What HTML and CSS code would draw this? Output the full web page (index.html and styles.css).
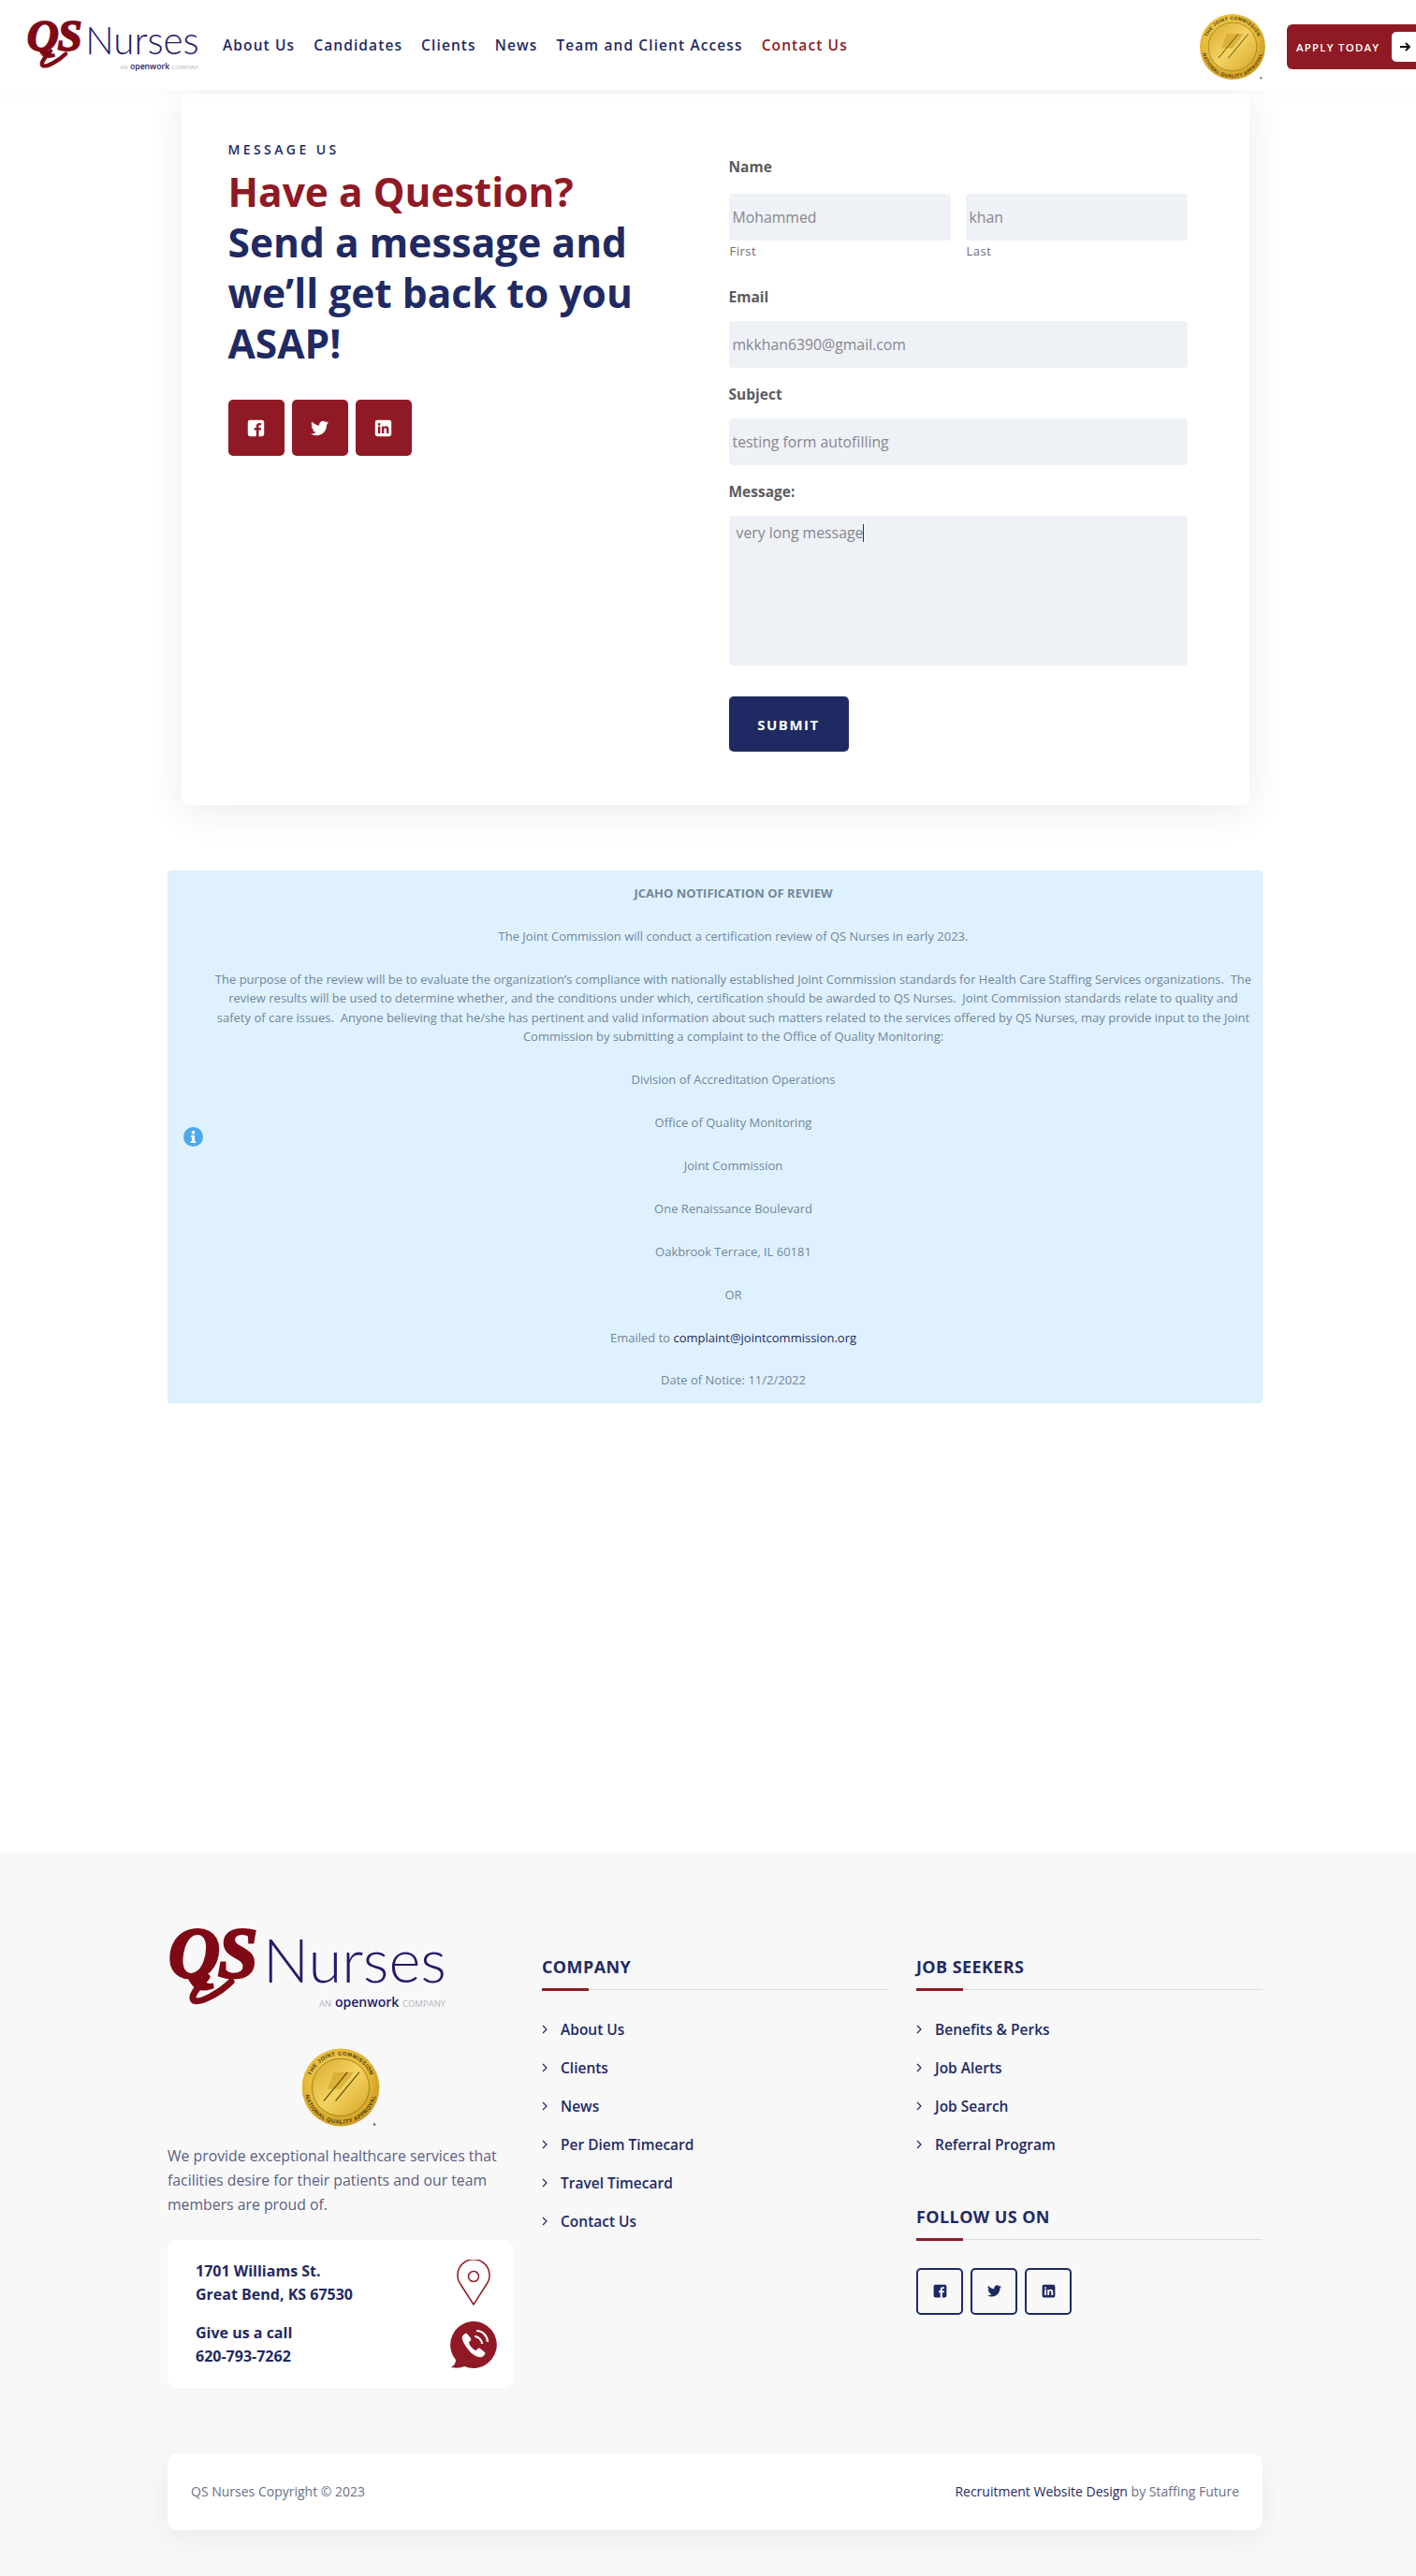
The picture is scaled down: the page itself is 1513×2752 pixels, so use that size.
FILE: index.html
```html
<!DOCTYPE html>
<html lang="en">
<head>
    <meta charset="utf-8" />
    <meta name="viewport" content="width=device-width, initial-scale=1.0">
    <title>Contact Us - QS Nurses</title>
    <link rel="stylesheet" href="styles.css">
</head>
<body>
    <svg class="icon-defs" width="0" height="0" aria-hidden="true">
        <defs>
            <radialGradient id="gold" cx="45%" cy="40%" r="65%">
                <stop offset="0%" stop-color="#f6d766" />
                <stop offset="60%" stop-color="#e6bb3a" />
                <stop offset="100%" stop-color="#c8941c" />
            </radialGradient>
            <linearGradient id="goldInner" x1="0" y1="0" x2="1" y2="1">
                <stop offset="0%" stop-color="#d9a92a" />
                <stop offset="50%" stop-color="#f3d462" />
                <stop offset="100%" stop-color="#d6a326" />
            </linearGradient>
            <path id="sealTop" d="M12 50a38 38 0 0 1 76 0" />
            <path id="sealBottom" d="M7 50a43 43 0 0 0 86 0" />
        </defs>
        <symbol id="seal" viewBox="0 0 100 100">
            <circle cx="50" cy="50" r="46" fill="url(#gold)" />
            <circle cx="50" cy="50" r="34" fill="url(#goldInner)" stroke="#8a6a14" stroke-width=".8" />
            <path d="M42 32h24L50 52H34z" fill="#d6a52c" opacity=".7" />
            <path d="M30 66l28-34M44 66l28-34" stroke="#5e4a10" stroke-width="1.300" fill="none" />
            <text class="seal-text"><textPath href="#sealTop" startOffset="50%" text-anchor="middle">THE JOINT COMMISSION</textPath></text>
            <text class="seal-text"><textPath href="#sealBottom" startOffset="50%" text-anchor="middle">NATIONAL QUALITY APPROVAL</textPath></text>
            <circle cx="90" cy="94" r="1.500" fill="#666" />
        </symbol>
        <symbol id="logo" viewBox="0 0 300 92">
            <path d="M42 54C32 66 24 74 28 79c6 4 28-8 40-20" fill="none" stroke="#7f0a16" stroke-width="7" stroke-linecap="round" />
            <text class="logo-qs" x="1" y="54">QS</text>
            <text class="logo-name" x="102" y="60" textLength="196" lengthAdjust="spacingAndGlyphs">Nurses</text>
            <text class="logo-sub" x="162" y="86">AN</text>
            <text class="logo-open" x="179" y="86">openwork</text>
            <text class="logo-sub" x="251" y="86">COMPANY</text>
        </symbol>
        <symbol id="fb" viewBox="0 0 24 24">
            <path d="M4 1h16a3 3 0 0 1 3 3v16a3 3 0 0 1-3 3h-4.200v-8.400h2.800l.4-3.200h-3.200V9.500c0-.9.3-1.500 1.600-1.500H19V5.100c-.3 0-1.300-.1-2.500-.1-2.500 0-4.100 1.500-4.100 4.200v2.200H9.600v3.200h2.800V23H4a3 3 0 0 1-3-3V4a3 3 0 0 1 3-3z" />
        </symbol>
        <symbol id="tw" viewBox="0 0 24 24">
            <path d="M23.953 4.570a10 10 0 0 1-2.825.775 4.958 4.958 0 0 0 2.163-2.723c-.951.555-2.005.959-3.127 1.184a4.920 4.920 0 0 0-8.384 4.482C7.690 8.095 4.067 6.130 1.640 3.162a4.822 4.822 0 0 0-.666 2.475c0 1.710.87 3.213 2.188 4.096a4.904 4.904 0 0 1-2.228-.616v.06a4.923 4.923 0 0 0 3.946 4.827 4.996 4.996 0 0 1-2.212.085 4.936 4.936 0 0 0 4.604 3.417 9.867 9.867 0 0 1-6.102 2.105c-.39 0-.779-.023-1.170-.067a13.995 13.995 0 0 0 7.557 2.209c9.053 0 13.998-7.496 13.998-13.985 0-.21 0-.42-.015-.63A9.935 9.935 0 0 0 24 4.590z" />
        </symbol>
        <symbol id="in" viewBox="0 0 24 24">
            <path fill-rule="evenodd" d="M4 1h16a3 3 0 0 1 3 3v16a3 3 0 0 1-3 3H4a3 3 0 0 1-3-3V4a3 3 0 0 1 3-3zM5 9.500V19h3V9.500zM6.500 5a1.700 1.700 0 1 0 0 3.400 1.700 1.700 0 0 0 0-3.400zM10 9.500V19h3v-5c0-1.300.6-2.200 1.800-2.200s1.700.9 1.700 2.200v5h3v-5.600c0-2.800-1.500-4.100-3.600-4.100-1.400 0-2.400.7-2.900 1.500V9.500z" />
        </symbol>
        <symbol id="chev" viewBox="0 0 6 10">
            <path d="M1 1l4 4-4 4" fill="none" stroke="currentColor" stroke-width="1.200" />
        </symbol>
    </svg>

    <div class="page">
        <header class="site-header">
            <a class="header-logo" href="#"><svg width="186" height="57"><use href="#logo" /></svg></a>
            <nav class="main-nav">
                <a href="#">About Us</a>
                <a href="#">Candidates</a>
                <a href="#">Clients</a>
                <a href="#">News</a>
                <a href="#">Team and Client Access</a>
                <a class="active" href="#">Contact Us</a>
            </nav>
            <svg class="header-seal" width="76" height="76"><use href="#seal" /></svg>
            <a class="apply-btn" href="#">
                <span>APPLY TODAY</span>
                <span class="apply-arrow">
                    <svg width="12" height="10" viewBox="0 0 12 10"><path d="M0 5h9M6 1l4 4-4 4" fill="none" stroke="#111" stroke-width="2" /></svg>
                </span>
            </a>
        </header>

        <section class="contact-card">
            <div class="contact-intro">
                <p class="eyebrow">MESSAGE US</p>
                <h1><span class="red">Have a Question?</span><br>Send a message and<br>we’ll get back to you<br>ASAP!</h1>
                <div class="social-red">
                    <a href="#"><svg width="19" height="19"><use href="#fb" /></svg></a>
                    <a href="#"><svg width="19" height="19"><use href="#tw" /></svg></a>
                    <a href="#"><svg width="19" height="19"><use href="#in" /></svg></a>
                </div>
            </div>
            <form class="contact-form" onsubmit="return false;">
                <label class="label-name">Name</label>
                <div class="name-row">
                    <div>
                        <input type="text" value="Mohammed" />
                        <small>First</small>
                    </div>
                    <div>
                        <input type="text" value="khan" />
                        <small>Last</small>
                    </div>
                </div>
                <label>Email</label>
                <input type="email" value="mkkhan6390@gmail.com" />
                <label>Subject</label>
                <input type="text" value="testing form autofilling" />
                <label>Message:</label>
                <div class="message-box">very long message<span class="caret"></span></div>
                <button type="submit">SUBMIT</button>
            </form>
        </section>

        <section class="notice">
            <svg class="notice-icon" width="21" height="21" viewBox="0 0 21 21">
                <circle cx="10.500" cy="10.500" r="10.500" fill="#4ea9ea" />
                <circle cx="10.500" cy="5.800" r="1.900" fill="#fff" />
                <path d="M8 9h4v6h1.300v2H7.700v-2H9v-4H8z" fill="#fff" />
            </svg>
            <div class="notice-body">
                <p><strong>JCAHO NOTIFICATION OF REVIEW</strong></p>
                <p>The Joint Commission will conduct a certification review of QS Nurses in early 2023.</p>
                <p>The purpose of the review will be to evaluate the organization’s compliance with nationally established Joint Commission standards for Health Care Staffing Services organizations.&nbsp; The<br>review results will be used to determine whether, and the conditions under which, certification should be awarded to QS Nurses.&nbsp; Joint Commission standards relate to quality and<br>safety of care issues.&nbsp; Anyone believing that he/she has pertinent and valid information about such matters related to the services offered by QS Nurses, may provide input to the Joint<br>Commission by submitting a complaint to the Office of Quality Monitoring:</p>
                <p>Division of Accreditation Operations</p>
                <p>Office of Quality Monitoring</p>
                <p>Joint Commission</p>
                <p>One Renaissance Boulevard</p>
                <p>Oakbrook Terrace, IL 60181</p>
                <p>OR</p>
                <p>Emailed to <a href="#">complaint@jointcommission.org</a></p>
                <p>Date of Notice: 11/2/2022</p>
            </div>
        </section>

        <footer class="site-footer">
            <div class="footer-grid">
                <div class="footer-about">
                    <svg class="footer-logo" width="300" height="92"><use href="#logo" /></svg>
                    <svg class="footer-seal" width="90" height="90"><use href="#seal" /></svg>
                    <p>We provide exceptional healthcare services that facilities desire for their patients and our team members are proud of.</p>
                    <div class="contact-box">
                        <div class="contact-line">
                            <span>1701 Williams St.<br>Great Bend, KS 67530</span>
                            <svg width="36" height="50" viewBox="0 0 36 50">
                                <path d="M18 48L4.500 27A17 17 0 1 1 31.500 27z" fill="none" stroke="#8f1a25" stroke-width="1.500" stroke-linejoin="round" />
                                <circle cx="18" cy="18" r="5.500" fill="none" stroke="#8f1a25" stroke-width="1.500" />
                            </svg>
                        </div>
                        <div class="contact-line">
                            <span>Give us a call<br>620-793-7262</span>
                            <svg width="50" height="50" viewBox="0 0 50 50">
                                <path d="M25 0a25 25 0 1 1-10 48c-4 2-9 2-14 1 3-2 5-4 5-8A25 25 0 0 1 25 0z" fill="#8f1a25" />
                                <path d="M13 16c2-3 4-4 5-3l4 5c1 1 0 3-2 4 0 3 5 9 8 9 1-2 3-3 4-2l5 4c1 1 0 3-3 5-3 1-9-1-14-7s-8-12-7-15z" fill="#fff" />
                                <path d="M26 16c4 0 8 4 8 8M28 10c7 0 12 6 12 12" fill="none" stroke="#fff" stroke-width="2.200" />
                            </svg>
                        </div>
                    </div>
                </div>
                <div class="footer-col">
                    <h4>COMPANY</h4>
                    <ul>
                        <li><svg width="6" height="10"><use href="#chev" /></svg><a href="#">About Us</a></li>
                        <li><svg width="6" height="10"><use href="#chev" /></svg><a href="#">Clients</a></li>
                        <li><svg width="6" height="10"><use href="#chev" /></svg><a href="#">News</a></li>
                        <li><svg width="6" height="10"><use href="#chev" /></svg><a href="#">Per Diem Timecard</a></li>
                        <li><svg width="6" height="10"><use href="#chev" /></svg><a href="#">Travel Timecard</a></li>
                        <li><svg width="6" height="10"><use href="#chev" /></svg><a href="#">Contact Us</a></li>
                    </ul>
                </div>
                <div class="footer-col">
                    <h4>JOB SEEKERS</h4>
                    <ul>
                        <li><svg width="6" height="10"><use href="#chev" /></svg><a href="#">Benefits &amp; Perks</a></li>
                        <li><svg width="6" height="10"><use href="#chev" /></svg><a href="#">Job Alerts</a></li>
                        <li><svg width="6" height="10"><use href="#chev" /></svg><a href="#">Job Search</a></li>
                        <li><svg width="6" height="10"><use href="#chev" /></svg><a href="#">Referral Program</a></li>
                    </ul>
                    <h4 class="follow-title">FOLLOW US ON</h4>
                    <div class="social-outline">
                        <a href="#"><svg width="15" height="15"><use href="#fb" /></svg></a>
                        <a href="#"><svg width="15" height="15"><use href="#tw" /></svg></a>
                        <a href="#"><svg width="15" height="15"><use href="#in" /></svg></a>
                    </div>
                </div>
            </div>
            <div class="copyright">
                <span>QS Nurses Copyright © 2023</span>
                <span><a href="#">Recruitment Website Design</a> by Staffing Future</span>
            </div>
        </footer>
    </div>
</body>
</html>
```

FILE: styles.css
```css
html {
    overflow-x: hidden;
}
body {
    margin: 0;
    font-family: "Open Sans", "Liberation Sans", sans-serif;
    color: #1f2a63;
    background: #fff;
}
a {
    color: inherit;
    text-decoration: none;
}
.icon-defs {
    position: absolute;
}
.page {
    width: 1528px;
}
.seal-text {
    font-family: "Liberation Sans", sans-serif;
    font-size: 6.500px;
    font-weight: 700;
    letter-spacing: .6px;
    fill: #4e3c0c;
}
.logo-qs {
    font-family: "Liberation Serif", serif;
    font-size: 76px;
    font-style: italic;
    font-weight: 700;
    letter-spacing: -2px;
    fill: #7f0a16;
    stroke: #7f0a16;
    stroke-width: 3px;
}
.logo-name {
    font-family: Lato, sans-serif;
    font-size: 66px;
    font-weight: 300;
    fill: #231c68;
}
.logo-sub {
    font-family: "Open Sans", sans-serif;
    font-size: 9.500px;
    fill: #b5b5b8;
}
.logo-open {
    font-family: "Open Sans", sans-serif;
    font-size: 14px;
    font-weight: 600;
    fill: #231c68;
}

/* header */
.site-header {
    position: relative;
    z-index: 2;
    display: flex;
    align-items: center;
    height: 96px;
    padding-left: 28px;
    background: #fff;
    box-shadow: 0 4px 14px rgba(0, 0, 0, .02);
}
.header-logo {
    display: flex;
    margin-top: 3px;
}
.main-nav {
    display: flex;
    gap: 20px;
    margin-left: 24px;
    font-size: 15.500px;
    font-weight: 600;
    letter-spacing: 1.100px;
}
.main-nav .active {
    color: #8f1a25;
}
.header-seal {
    margin-left: auto;
    margin-right: 20px;
    margin-top: 4px;
}
.apply-btn {
    display: flex;
    align-items: center;
    justify-content: space-between;
    width: 153px;
    height: 48px;
    box-sizing: border-box;
    margin-top: 4px;
    padding-left: 10px;
    border-radius: 6px 0 0 6px;
    background: #8f1a25;
    color: #fff;
    font-size: 11.500px;
    font-weight: 600;
    letter-spacing: 1.200px;
}
.apply-arrow {
    display: flex;
    align-items: center;
    width: 41px;
    height: 32px;
    box-sizing: border-box;
    padding-left: 9px;
    border-radius: 5px 0 0 5px;
    background: #fff;
}

/* contact card */
.contact-card {
    display: grid;
    grid-template-columns: 535px 1fr;
    width: 1141px;
    box-sizing: border-box;
    margin: 4px auto 0;
    padding: 50px 66px 57px 50px;
    border-radius: 8px;
    background: #fff;
    box-shadow: 0 6px 40px rgba(20, 30, 70, .09);
}
.eyebrow {
    margin: 0 0 8px;
    font-size: 14px;
    font-weight: 600;
    line-height: 20px;
    letter-spacing: 3.400px;
}
.contact-intro h1 {
    margin: 0 0 33px;
    font-size: 42.500px;
    font-weight: 700;
    line-height: 54px;
}
.red {
    color: #8f1a25;
}
.social-red {
    display: flex;
    gap: 8px;
}
.social-red a {
    display: flex;
    align-items: center;
    justify-content: center;
    width: 60px;
    height: 60px;
    border-radius: 5px;
    background: #8f1a25;
    fill: #fff;
}
.contact-form {
    display: flex;
    flex-direction: column;
}
.contact-form label {
    display: block;
    margin: 0 0 15px;
    color: #5c5c61;
    font-size: 15.500px;
    font-weight: 700;
    line-height: 22px;
}
.contact-form .label-name {
    margin-top: 17px;
    margin-bottom: 18px;
}
.contact-form input,
.message-box {
    width: 100%;
    box-sizing: border-box;
    border: none;
    border-radius: 4px;
    background: #eef1f6;
    color: #85878e;
    font-family: inherit;
    font-size: 15.800px;
    outline: none;
}
.contact-form input {
    display: block;
    height: 50px;
    margin-bottom: 17px;
    padding: 0 4px;
}
.name-row {
    display: grid;
    grid-template-columns: 1fr 1fr;
    gap: 16px;
    margin-bottom: 28px;
}
.name-row input {
    margin-bottom: 1px;
}
.name-row small {
    display: block;
    padding-left: 1px;
    color: #6a6a70;
    font-size: 13px;
    line-height: 20px;
    letter-spacing: .5px;
}
.message-box {
    height: 160px;
    padding: 6px 8px;
    line-height: 24px;
}
.caret {
    display: inline-block;
    width: 1px;
    height: 19px;
    background: #333;
    vertical-align: -4px;
}
.contact-form button {
    width: 128px;
    height: 59px;
    margin-top: 33px;
    border: none;
    border-radius: 5px;
    background: #1f2a63;
    color: #fff;
    font-family: inherit;
    font-size: 15px;
    font-weight: 700;
    letter-spacing: 1.500px;
}

/* notice */
.notice {
    display: flex;
    align-items: center;
    width: 1170px;
    box-sizing: border-box;
    margin: 70px auto 0;
    padding: 0 5px 0 16px;
    border: 1px solid #d6ecfb;
    border-radius: 4px;
    background: #dff1fd;
    color: #71879a;
    font-size: 13px;
    line-height: 20.500px;
}
.notice-icon {
    flex: none;
}
.notice-body {
    flex: 1;
    padding: 13px 0 13px 7px;
    text-align: center;
}
.notice-body p {
    margin: 0 0 25.400px;
}
.notice-body p:last-child {
    margin-bottom: 0;
}
.notice-body a {
    color: #1f2a63;
}

/* footer */
.site-footer {
    box-sizing: border-box;
    margin-top: 480px;
    padding: 79px 0 50px;
    background: #f8f8f9;
}
.footer-grid {
    display: grid;
    grid-template-columns: 370px 370px 370px;
    column-gap: 30px;
    width: 1170px;
    margin: 0 auto;
}
.footer-about {
    display: flex;
    flex-direction: column;
}
.footer-logo {
    display: block;
}
.footer-seal {
    align-self: center;
    margin-top: 35px;
}
.footer-about p {
    margin: 15px 0 0;
    color: #5c6080;
    font-size: 15.800px;
    line-height: 26px;
}
.contact-box {
    margin-top: 25px;
    padding: 21px 18px 21px 30px;
    border-radius: 10px;
    background: #fff;
    font-size: 16px;
    font-weight: 700;
    line-height: 25px;
}
.contact-line {
    display: flex;
    align-items: center;
    justify-content: space-between;
}
.contact-line + .contact-line {
    margin-top: 16px;
}
.contact-line svg {
    flex: none;
    width: 50px;
}
.footer-col h4 {
    position: relative;
    margin: 31px 0 0;
    padding-bottom: 12px;
    border-bottom: 1px solid #dedede;
    font-size: 18px;
    font-weight: 700;
    line-height: 24px;
    letter-spacing: .4px;
}
.footer-col h4::after {
    content: "";
    position: absolute;
    left: 0;
    bottom: -2px;
    width: 50px;
    height: 3px;
    background: #8f1a25;
}
.footer-col ul {
    margin: 22px 0 0;
    padding: 0;
    list-style: none;
}
.footer-col li {
    display: flex;
    align-items: center;
    gap: 14px;
    height: 41px;
    font-size: 15.500px;
    font-weight: 600;
}
.footer-col .follow-title {
    margin-top: 44px;
}
.social-outline {
    display: flex;
    gap: 8px;
    margin-top: 30px;
}
.social-outline a {
    display: flex;
    align-items: center;
    justify-content: center;
    width: 50px;
    height: 50px;
    box-sizing: border-box;
    border: 2px solid #1f2a63;
    border-radius: 5px;
    fill: #1f2a63;
}
.copyright {
    display: flex;
    align-items: center;
    justify-content: space-between;
    width: 1170px;
    height: 82px;
    box-sizing: border-box;
    margin: 70px auto 0;
    padding: 0 25px;
    border-radius: 10px;
    background: #fff;
    box-shadow: 0 10px 30px rgba(20, 30, 70, .06);
    color: #6b6f85;
    font-size: 14px;
}
.copyright a {
    color: #1f2a63;
}
```
